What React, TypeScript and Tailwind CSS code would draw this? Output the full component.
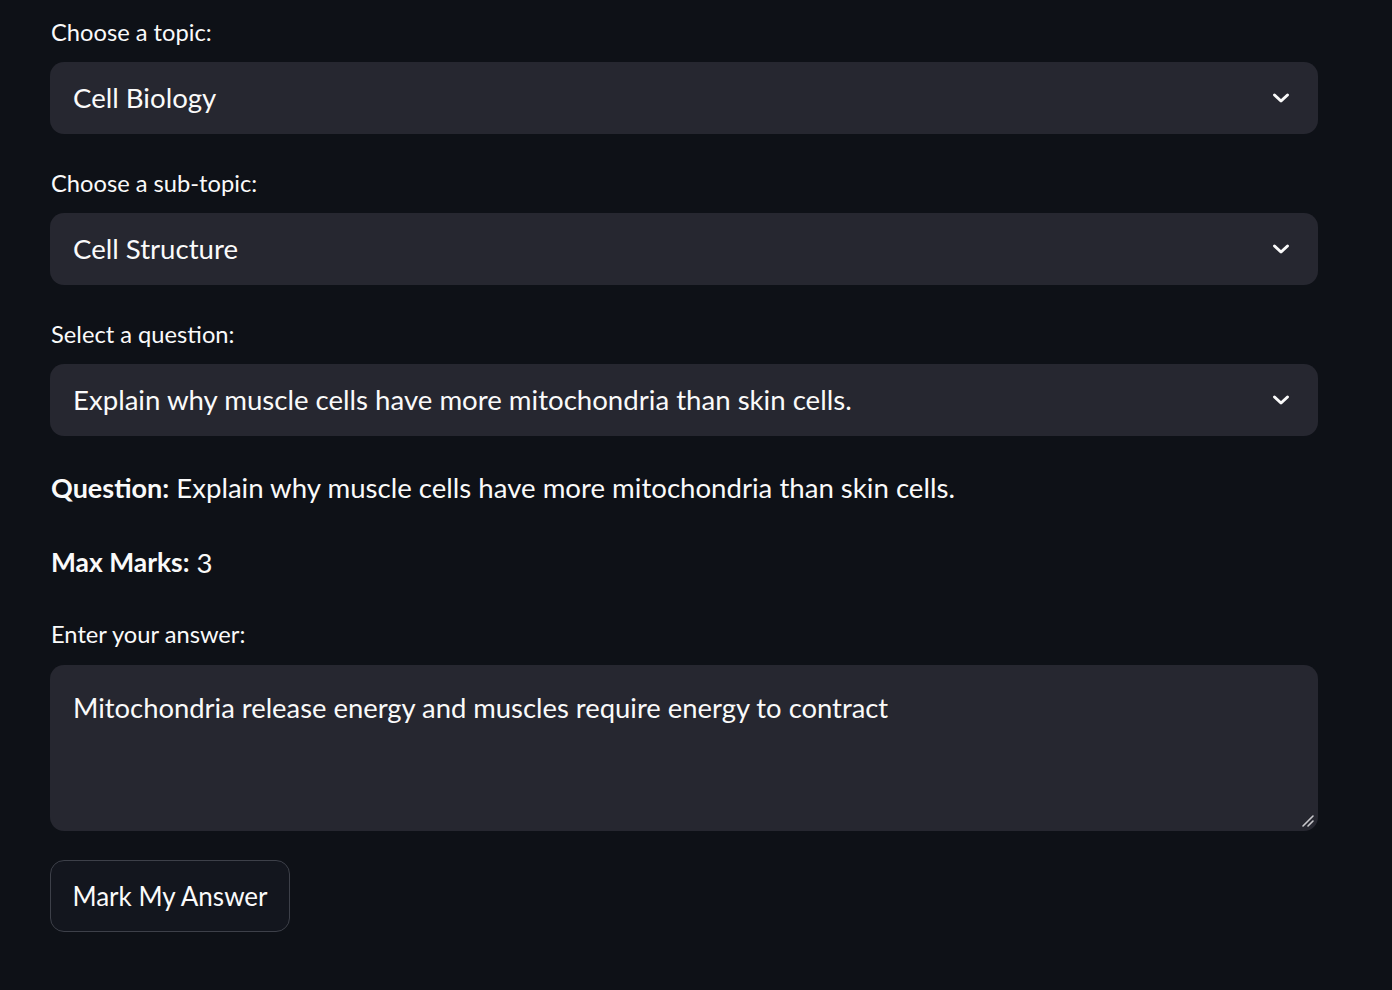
import { useState } from "react";

const selects = [
  { label: "Choose a topic:", value: "Cell Biology" },
  { label: "Choose a sub-topic:", value: "Cell Structure" },
  {
    label: "Select a question:",
    value: "Explain why muscle cells have more mitochondria than skin cells.",
  },
];

const font = { fontFamily: "Lato, 'Noto Sans', sans-serif" };

const Chevron = () => (
  <svg width="18" height="12" viewBox="0 0 18 12" fill="none">
    <path
      d="M2.5 3 L9 9 L15.5 3"
      stroke="#fafafa"
      strokeWidth="3"
      strokeLinecap="round"
      strokeLinejoin="round"
    />
  </svg>
);

const App = () => {
  const [answer, setAnswer] = useState(
    "Mitochondria release energy and muscles require energy to contract"
  );

  return (
    <div className="min-h-[990px] w-full bg-[#0e1117] text-[#fafafa]" style={font}>
      <div className="flex w-[1268px] flex-col pl-[50px] pt-[12px] box-content">
        {selects.map((s, i) => (
          <div key={i} className={i > 0 ? "mt-[29px]" : ""}>
            <div className="flex h-[42px] items-center pl-px text-[23.7px]">
              {s.label}
            </div>
            <div className="mt-2 flex h-[72px] items-center justify-between rounded-[14px] bg-[#262730] pl-[23px] pr-[28px] text-[27.6px]">
              <span>{s.value}</span>
              <Chevron />
            </div>
          </div>
        ))}

        <div className="mt-[31px] flex h-[42px] items-center pl-px text-[27.6px]">
          <span className="text-[27px] font-bold">Question:</span>
          <span className="ml-[7px]">
            Explain why muscle cells have more mitochondria than skin cells.
          </span>
        </div>

        <div className="mt-[33px] flex h-[42px] items-center pl-px text-[27.6px]">
          <span className="text-[26.4px] font-bold">Max Marks:</span>
          <span className="ml-[7px]">3</span>
        </div>

        <div className="mt-[30px] flex h-[42px] items-center pl-px text-[23.7px]">
          Enter your answer:
        </div>
        <div className="relative mt-[9px]">
          <textarea
            value={answer}
            onChange={(e) => setAnswer(e.target.value)}
            className="block h-[166px] w-full resize-none rounded-[14px] bg-[#262730] px-[23px] pt-[24px] text-[27.4px] leading-[38px] text-[#fafafa] outline-none"
            style={font}
          />
          <svg
            className="pointer-events-none absolute bottom-[3px] right-[3px]"
            width="14"
            height="14"
            viewBox="0 0 14 14"
          >
            <path d="M12 2 L2 12 M12 7 L7 12" stroke="#c8c8cc" strokeWidth="1.6" strokeLinecap="round" />
          </svg>
        </div>

        <button className="mt-[29px] flex h-[72px] w-[240px] items-center justify-center rounded-[14px] border border-[#3d4049] bg-[#13161e] text-[26px] text-[#fafafa]">
          Mark My Answer
        </button>
      </div>
    </div>
  );
};

export default App;
